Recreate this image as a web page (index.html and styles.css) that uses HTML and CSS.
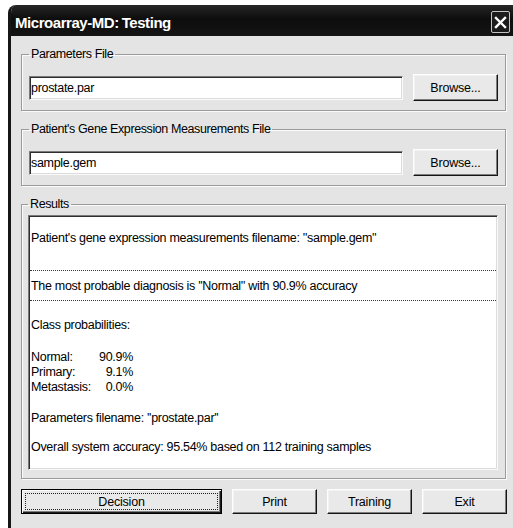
FILE: index.html
```html
<!DOCTYPE html>
<html lang="en">
<head>
<meta charset="utf-8">
<title>Microarray-MD: Testing</title>
<link rel="stylesheet" href="styles.css">
</head>
<body>
<div class="window">
  <div class="titlebar">
    <span class="title">Microarray-MD:<span class="title-gap"></span>Testing</span>
    <button class="close" type="button" aria-label="Close">
      <svg width="13" height="13" viewBox="0 0 13 13"><path d="M2 2 L11 11 M11 2 L2 11" stroke="#fff" stroke-width="2.4" stroke-linecap="square" fill="none"/></svg>
    </button>
  </div>
  <div class="client">
    <fieldset class="group">
      <legend>Parameters File</legend>
      <div class="file-row">
        <input class="field" type="text" value="prostate.par" readonly>
        <button class="btn" type="button">Browse...</button>
      </div>
    </fieldset>
    <fieldset class="group">
      <legend>Patient's Gene Expression Measurements File</legend>
      <div class="file-row">
        <input class="field" type="text" value="sample.gem" readonly>
        <button class="btn" type="button">Browse...</button>
      </div>
    </fieldset>
    <fieldset class="group results-group">
      <legend>Results</legend>
      <div class="results">
        <p class="line first">Patient's gene expression measurements filename: ''sample.gem''</p>
        <div class="rule rule-top"></div>
        <p class="line diagnosis">The most probable diagnosis is ''Normal'' with 90.9% accuracy</p>
        <div class="rule rule-bottom"></div>
        <p class="line heading">Class probabilities:</p>
        <div class="probs">
          <span>Normal:</span><span class="pct">90.9%</span>
          <span>Primary:</span><span class="pct">9.1%</span>
          <span>Metastasis:</span><span class="pct">0.0%</span>
        </div>
        <p class="line params">Parameters filename: ''prostate.par''</p>
        <p class="line overall">Overall system accuracy: 95.54% based on 112 training samples</p>
      </div>
    </fieldset>
    <div class="actions">
      <button class="btn btn-default wide" type="button"><span class="focus">Decision</span></button>
      <button class="btn" type="button">Print</button>
      <button class="btn" type="button">Training</button>
      <button class="btn" type="button">Exit</button>
    </div>
  </div>
</div>
</body>
</html>
```

FILE: styles.css
```css
html, body {
  margin: 0;
  height: 100%;
  overflow: hidden;
  background: #fff;
}

body {
  font-family: "Liberation Sans", Arial, sans-serif;
  font-size: 12.5px;
  color: #000;
}

/* dialog frame (runs past the right and bottom edges) */
.window {
  box-sizing: border-box;
  width: 515px;
  height: 540px;
  margin: 5px 0 0 8px;
  background: #e4e4e4;
  border-left: 3px solid #161616;
  border-right: 3px solid #161616;
  border-radius: 8px 8px 0 0;
  overflow: hidden;
}

.titlebar {
  height: 31px;
  display: flex;
  align-items: flex-start;
  justify-content: space-between;
  padding: 0 10px 0 4px;
  background: linear-gradient(#262626, #0d0d0d 45%, #141414);
}

.title {
  color: #fff;
  font-weight: bold;
  font-size: 15px;
  line-height: 31px;
  padding-top: 2px;
  letter-spacing: -0.45px;
}

.title-gap {
  display: inline-block;
  width: 3px;
}

.close {
  margin-top: 6px;
  width: 19px;
  height: 22px;
  padding: 0;
  display: flex;
  align-items: center;
  justify-content: center;
  background: #1c1c1c;
  border: 1px solid #c4c4c4;
  border-radius: 2px;
}

.client {
  padding: 10px 14px 0 10px;
}

/* etched group boxes */
.group {
  margin: 0 0 10px;
  padding: 12px 7px 9px;
  min-width: 0;
  border: 1px solid #9a9a9a;
  box-shadow: inset 1px 1px 0 #fbfbfb, 1px 1px 0 #fbfbfb;
}

.group legend {
  margin-left: 0;
  padding: 0 2px;
  line-height: 16px;
  font-size: 12.5px;
  letter-spacing: -0.4px;
}

.file-row {
  display: flex;
  align-items: center;
  gap: 10px;
}

.field {
  flex: 1;
  min-width: 0;
  box-sizing: border-box;
  height: 24px;
  margin: 0;
  padding: 0 1px;
  font: 12.5px "Liberation Sans", Arial, sans-serif;
  letter-spacing: -0.3px;
  color: #000;
  background: #fff;
  border: 1px solid;
  border-color: #7a7a7a #fafafa #fafafa #7a7a7a;
  box-shadow: inset 1px 1px 0 #2e2e2e, inset -1px -1px 0 #dcdcdc;
  outline: none;
}

/* raised push buttons */
.btn {
  box-sizing: border-box;
  width: 85px;
  height: 27px;
  margin: 0;
  padding: 0;
  flex: none;
  font: 12.5px "Liberation Sans", Arial, sans-serif;
  letter-spacing: -0.2px;
  color: #000;
  background: #e9e9e9;
  border: 1px solid;
  border-color: #fdfdfd #151515 #151515 #fdfdfd;
  box-shadow: inset -1px -1px 0 #7e7e7e, inset 1px 1px 0 #f2f2f2;
}

/* results panel */
.results-group {
  padding: 3px 7px 8px 6px;
}

.results {
  box-sizing: border-box;
  height: 255px;
  padding: 0 0 0 1px;
  background: #fff;
  border: 1px solid;
  border-color: #7a7a7a #fafafa #fafafa #7a7a7a;
  box-shadow: inset 1px 1px 0 #2e2e2e, inset -1px -1px 0 #dcdcdc;
  letter-spacing: -0.3px;
}

.line {
  margin: 0;
  line-height: 15px;
  padding-left: 1px;
}

.first { margin-top: 15px; }
.rule {
  border-top: 1px dotted #3a3a3a;
  margin-right: 1px;
}
.rule-top { margin-top: 24px; }
.diagnosis { margin-top: 8px; }
.rule-bottom { margin-top: 6px; }
.heading { margin-top: 17px; }

.probs {
  display: grid;
  grid-template-columns: 68px 34px;
  margin-top: 17px;
  line-height: 15px;
  padding-left: 1px;
}

.pct { text-align: right; }

.params { margin-top: 16px; }
.overall { margin-top: 14px; }

/* command buttons */
.actions {
  display: flex;
  gap: 10px;
}

.actions .btn {
  height: 25px;
}

.actions .wide {
  width: 201px;
}

.btn-default {
  display: flex;
  padding: 3px;
  border: 1px solid #000;
  box-shadow: inset 1px 1px 0 #fdfdfd, inset -1px -1px 0 #1c1c1c, inset -2px -2px 0 #7e7e7e;
}

.focus {
  flex: 1;
  display: flex;
  align-items: center;
  justify-content: center;
  border: 1px dotted #222;
}
```
